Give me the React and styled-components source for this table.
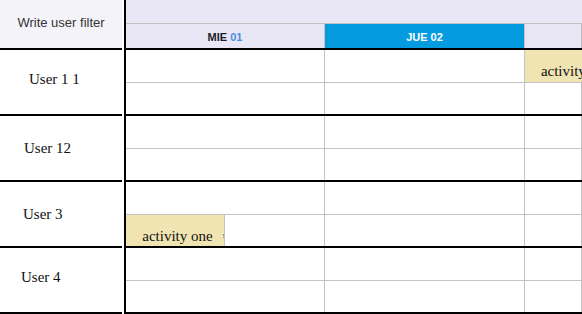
import React from 'react';
import styled, { createGlobalStyle } from 'styled-components';

const GlobalStyle = createGlobalStyle`
  html, body {
    margin: 0;
    padding: 0;
    background: #fff;
    overflow: hidden;
  }
  * {
    box-sizing: border-box;
  }
`;

const Page = styled.div`
  display: flex;
  width: 582px;
  height: 314px;
  overflow: hidden;
`;

const Sidebar = styled.div`
  flex: 0 0 122px;
  display: flex;
  flex-direction: column;
`;

const FilterBox = styled.div`
  height: 48px;
  background: #f3f3f9;
  display: flex;
  align-items: center;
  justify-content: center;
  padding-bottom: 3px;
  font-family: 'Liberation Sans', Arial, sans-serif;
  font-size: 13px;
  color: #333;
`;

const UserRow = styled.div`
  height: 66px;
  border-top: 2px solid #000;
  display: flex;
  align-items: center;
  padding-left: ${(p) => p.$left}px;
  padding-bottom: ${(p) => p.$up}px;
  font-family: 'Liberation Serif', 'Times New Roman', serif;
  font-size: 15px;
  color: #111;
  &:last-child {
    height: 68px;
    border-bottom: 2px solid #000;
  }
`;

const Timeline = styled.div`
  flex: 1;
  margin-left: 2px;
  border-left: 2px solid #000;
  display: flex;
  flex-direction: column;
  overflow: hidden;
`;

const TopBand = styled.div`
  height: 24px;
  background: #e9e7f5;
  border-bottom: 1px solid #c3c3c3;
`;

const DayRow = styled.div`
  display: flex;
  height: 24px;
  background: #e9e7f5;
`;

const DayCell = styled.div`
  flex: ${(p) => (p.$w ? `0 0 ${p.$w}px` : '1')};
  border-right: 1px solid #c3c3c3;
  display: flex;
  align-items: center;
  justify-content: center;
  padding-top: 1px;
  background: ${(p) => (p.$today ? '#049be0' : 'transparent')};
  color: ${(p) => (p.$today ? '#fff' : '#1d1d2b')};
  font-family: 'Liberation Sans', Arial, sans-serif;
  font-weight: bold;
  font-size: 11px;
  white-space: pre;
`;

const DayNum = styled.span`
  color: ${(p) => (p.$today ? '#fff' : '#4b8fde')};
`;

const LaneGroup = styled.div`
  border-top: 2px solid #000;
  &:last-child {
    border-bottom: 2px solid #000;
  }
`;

const Lane = styled.div`
  display: flex;
  height: ${(p) => (p.$first ? 33 : 31)}px;
  border-bottom: ${(p) => (p.$first ? '1px solid #c3c3c3' : 'none')};
`;

const Slot = styled.div`
  flex: ${(p) => (p.$w ? `0 0 ${p.$w}px` : '1')};
  border-right: 1px solid #c3c3c3;
  display: flex;
  min-width: 0;
`;

const Activity = styled.div`
  position: relative;
  flex: 0 0 99px;
  background: #f0e4b3;
  border-right: 1px solid #c3c3c3;
  padding-top: 13px;
  padding-left: 5px;
  text-align: center;
  white-space: nowrap;
  font-family: 'Liberation Serif', 'Times New Roman', serif;
  font-size: 15px;
  color: #111;
  &::after {
    content: '';
    position: absolute;
    right: 0;
    top: 19px;
    height: 4px;
    border-left: 1px dotted #8a8a8a;
  }
`;

const days = [
  { name: 'MIE', num: '01', w: 199 },
  { name: 'JUE', num: '02', w: 200, today: true },
  { name: '', num: '' },
];

const users = [
  { name: 'User 1 1', left: 29, up: 5, events: [{ lane: 0, col: 2, label: 'activity two' }] },
  { name: 'User 12', left: 24, up: 0, events: [] },
  { name: 'User 3', left: 23, up: 0, events: [{ lane: 1, col: 0, label: 'activity one' }] },
  { name: 'User 4', left: 21, up: 6, events: [] },
];

const App = () => {
  return (
    <>
      <GlobalStyle />
      <Page>
        <Sidebar>
          <FilterBox>Write user filter</FilterBox>
          {users.map((u) => (
            <UserRow key={u.name} $left={u.left} $up={u.up}>
              {u.name}
            </UserRow>
          ))}
        </Sidebar>
        <Timeline>
          <TopBand />
          <DayRow>
            {days.map((d, i) => (
              <DayCell key={i} $w={d.w} $today={d.today}>
                {d.name && `${d.name} `}
                <DayNum $today={d.today}>{d.num}</DayNum>
              </DayCell>
            ))}
          </DayRow>
          {users.map((u) => (
            <LaneGroup key={u.name}>
              {[0, 1].map((lane) => (
                <Lane key={lane} $first={lane === 0}>
                  {days.map((d, col) => {
                    const ev = u.events.find((e) => e.lane === lane && e.col === col);
                    return (
                      <Slot key={col} $w={d.w}>
                        {ev && <Activity>{ev.label}</Activity>}
                      </Slot>
                    );
                  })}
                </Lane>
              ))}
            </LaneGroup>
          ))}
        </Timeline>
      </Page>
    </>
  );
};

export default App;
